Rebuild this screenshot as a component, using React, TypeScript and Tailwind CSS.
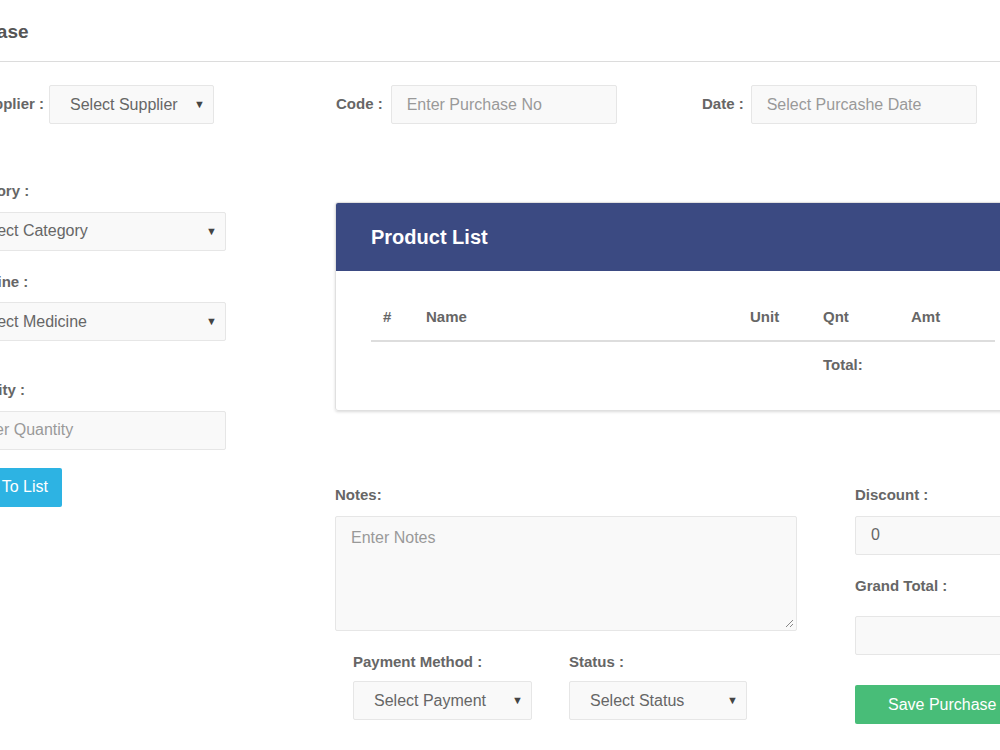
import React from "react";

const lbl = "text-[15px] font-bold text-[#666]";
const field = "h-[39px] bg-[#f9f9f9] border border-[#e6e6e6] rounded-[2px] text-[16px] flex items-center";

function Sel({ text, w, pl = "pl-5" }: { text: string; w: string; pl?: string }) {
  return (
    <div className={`${field} ${w} ${pl} pr-2 justify-between text-[#666]`}>
      <span>{text}</span>
      <span className="text-[11px] text-[#444]">▼</span>
    </div>
  );
}
function Inp({ text, w, color = "text-[#999]" }: { text: string; w: string; color?: string }) {
  return <div className={`${field} ${w} px-[15px] ${color}`}>{text}</div>;
}

export default function App() {
  return (
    <div className="w-[1000px] h-[750px] overflow-hidden bg-white" style={{ fontFamily: '"Liberation Sans", Arial, sans-serif' }}>
      <div className="ml-[-120px] w-[1200px]">
        <div className="h-[62px] border-b border-[#dcdcdc] flex items-center pl-[63px] pt-[3px] text-[19px] font-bold text-[#555]">Purchase</div>
        <div className="flex items-center mt-[23px]">
          <div className="w-[456px] flex items-center">
            <div className={`${lbl} w-[169px] text-right pr-[5px]`}>Supplier :</div>
            <Sel text="Select Supplier" w="w-[165px]" />
          </div>
          <div className="w-[366px] flex items-center gap-[8px]">
            <div className={lbl}>Code :</div>
            <Inp text="Enter Purchase No" w="w-[226px]" />
          </div>
          <div className="flex items-center gap-[7px]">
            <div className={lbl}>Date :</div>
            <Inp text="Select Purcashe Date" w="w-[226px]" />
          </div>
        </div>
        <div className="flex items-start">
          <div className="w-[346px] pl-[75px] mt-[56px] flex flex-col">
            <div className={`${lbl} mb-[9px]`}>Category :</div>
            <Sel text="Select Category" w="w-[271px]" pl="pl-[18px]" />
            <div className={`${lbl} mt-[20px] mb-[9px]`}>Medicine :</div>
            <Sel text="Select Medicine" w="w-[271px]" pl="pl-[18px]" />
            <div className={`${lbl} mt-[38px] mb-[9px]`}>Quantity :</div>
            <Inp text="Enter Quantity" w="w-[271px]" />
            <div className="mt-[18px] w-[107px] h-[39px] bg-[#2db3e3] text-white text-[16px] flex items-center justify-center rounded-[2px]">Add To List</div>
          </div>
          <div className="ml-[109px] mt-[78px] w-[700px]">
            <div className="w-[696px] border border-[#e0e0e0] rounded-[3px] shadow-[0_1px_3px_rgba(0,0,0,0.15)] overflow-hidden">
              <div className="h-[68px] bg-[#3b4a82] flex items-center pl-[35px] text-white text-[20px] font-bold">Product List</div>
              <div className="px-[35px] pt-[24px] pb-[21px]">
                <div className="grid grid-cols-[43px_324px_73px_88px_1fr] h-[47px] items-center border-b-2 border-[#ddd] text-[15px] font-bold text-[#666]">
                  <div className="px-3">#</div><div className="px-3">Name</div><div className="px-3">Unit</div><div className="px-3">Qnt</div><div className="px-3">Amt</div>
                </div>
                <div className="grid grid-cols-[43px_324px_73px_88px_1fr] h-[47px] items-center text-[15px] font-bold text-[#666]">
                  <div /><div /><div /><div className="px-3">Total:</div><div />
                </div>
              </div>
            </div>
            <div className="flex mt-[73px]">
              <div className="w-[465px]">
                <div className={`${lbl} mb-[9px]`}>Notes:</div>
                <div className="h-[115px] bg-[#f9f9f9] border border-[#e6e6e6] rounded-[2px] px-[15px] pt-[9px] text-[16px] text-[#999] relative">
                  Enter Notes
                  <svg className="absolute right-[2px] bottom-[2px]" width="9" height="9" viewBox="0 0 9 9"><path d="M8 1L1 8M8 5L5 8" stroke="#888" strokeWidth="1" /></svg>
                </div>
                <div className="flex pl-[18px] mt-[20px] gap-[37px]">
                  <div className="flex flex-col gap-[8px]">
                    <div className={lbl}>Payment Method :</div>
                    <Sel text="Select Payment" w="w-[179px]" />
                  </div>
                  <div className="flex flex-col gap-[8px]">
                    <div className={lbl}>Status :</div>
                    <Sel text="Select Status" w="w-[178px]" />
                  </div>
                </div>
              </div>
              <div className="ml-[58px] w-[180px] flex flex-col">
                <div className={`${lbl} mb-[9px]`}>Discount :</div>
                <Inp text="0" w="w-[180px]" color="text-[#666]" />
                <div className={`${lbl} mt-[20px] mb-[19px]`}>Grand Total :</div>
                <Inp text="" w="w-[180px]" />
                <div className="mt-[30px] h-[39px] w-[180px] bg-[#48bd78] text-white text-[16px] flex items-center pl-[33px] rounded-[2px]">Save Purchase</div>
              </div>
            </div>
          </div>
        </div>
      </div>
    </div>
  );
}
